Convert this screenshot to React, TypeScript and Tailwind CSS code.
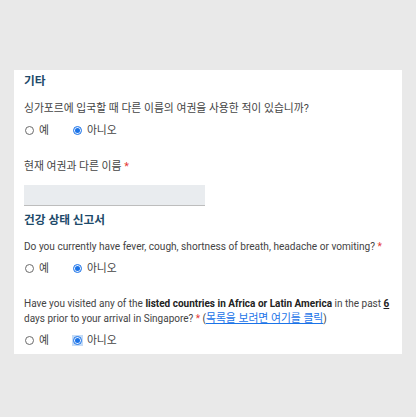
import { ReactNode } from "react";

const font = { fontFamily: "Roboto, 'Noto Sans CJK KR', sans-serif" };

function Radio({ checked, label, focus }: { checked?: boolean; label: string; focus?: boolean }) {
  return (
    <label className="flex items-center gap-[4px]">
      <span className={`flex h-[11px] w-[11px] items-center justify-center ${focus ? "bg-[#c5dcf7]" : ""}`}>
        <span
          className={`flex h-[9px] w-[9px] items-center justify-center rounded-full border ${
            checked ? "border-[#1a73e8] bg-[#e8f0fe]" : "border-[#6b6b6b] bg-white"
          }`}
        >
          {checked && <span className="h-[5px] w-[5px] rounded-full bg-[#1a73e8]" />}
        </span>
      </span>
      <span>{label}</span>
    </label>
  );
}

function YesNo({ focus }: { focus?: boolean }) {
  return (
    <div className="mt-[7px] flex h-[15px] items-center gap-[23px] text-[10.8px] text-[#444]">
      <Radio label="예" />
      <Radio label="아니오" checked focus={focus} />
    </div>
  );
}

function Heading({ children }: { children: ReactNode }) {
  return <h2 className="text-[11.7px] font-bold leading-[16px] text-[#1d4a6a]">{children}</h2>;
}

const Req = () => <span className="text-[#e53935]">*</span>;

export default function App() {
  return (
    <div className="h-[417px] w-[416px] bg-[#e9e9e9] pt-[70px]" style={font}>
      <div className="mx-[14px] h-[284px] bg-white px-[10px] pt-[3px] text-[10.1px] leading-[15px] text-[#444]">
        <Heading>기타</Heading>
        <p className="mt-[12px] text-[10.8px]">싱가포르에 입국할 때 다른 이름의 여권을 사용한 적이 있습니까?</p>
        <YesNo />

        <p className="mt-[21px] text-[10.8px]">
          현재 여권과 다른 이름 <Req />
        </p>
        <div className="mt-[11px] h-[21px] w-[181px] border-b border-[#bdbdbd] bg-[#e9ecef]" />

        <div className="mt-[6px]">
          <Heading>건강 상태 신고서</Heading>
        </div>
        <p className="mt-[11px]">
          Do you currently have fever, cough, shortness of breath, headache or vomiting? <Req />
        </p>
        <YesNo />

        <p className="mt-[20px] text-[10px]">
          Have you visited any of the <b className="font-bold text-[#222]">listed countries in Africa or Latin America</b> in
          the past <b className="font-bold text-[#222] underline">6</b> days prior to your arrival in Singapore? <Req />{" "}
          (<a className="text-[10.8px] text-[#1a73e8] underline">목록을 보려면 여기를 클릭</a>)
        </p>
        <YesNo focus />
      </div>
    </div>
  );
}
